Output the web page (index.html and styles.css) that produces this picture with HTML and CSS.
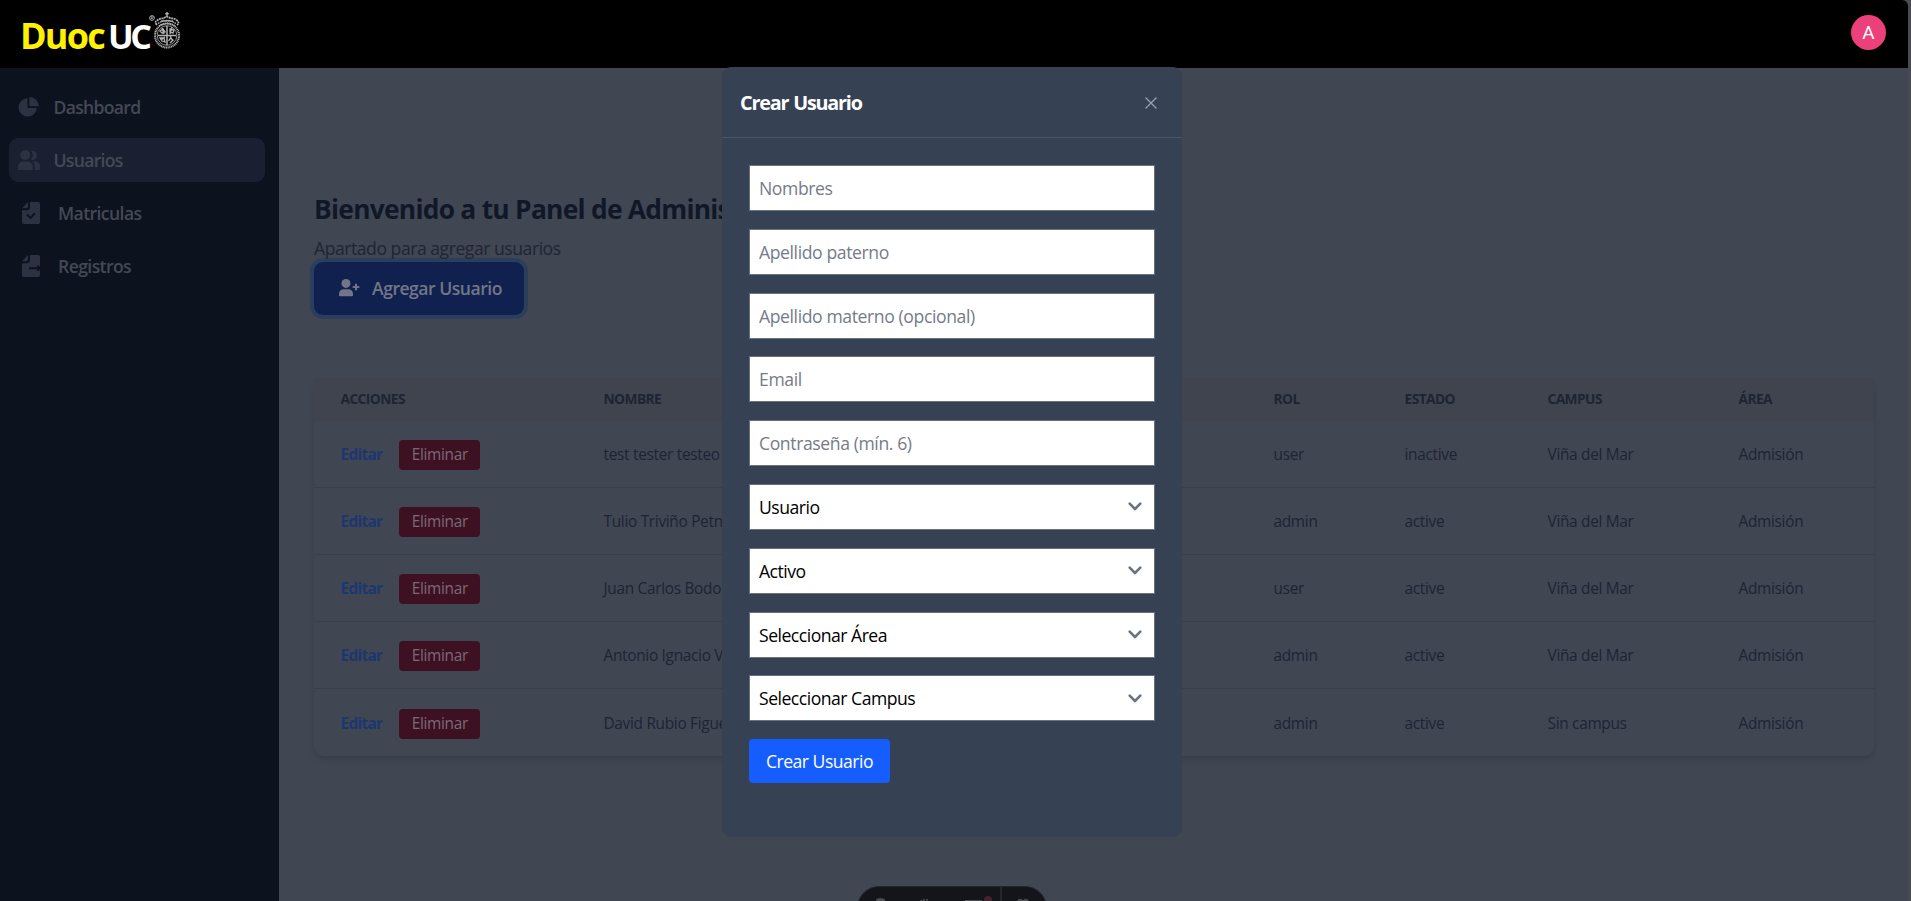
FILE: index.html
```html
<!DOCTYPE html>
<html lang="es">
<head>
<meta charset="utf-8">
<title>Panel de Administración</title>
<link rel="stylesheet" href="styles.css">
</head>
<body>
<div class="page">
  <header class="topbar">
    <div class="logo">
      <span class="logo-duoc">Duoc</span><span class="logo-uc">UC</span>
      <svg class="crest" viewBox="0 0 31 40" width="31" height="40" fill="none" stroke="#b4b4b4">
        <circle cx="3" cy="8" r="2.4" stroke-width=".9"/><path d="M2.2 9.5V6.6h1q.9.1.9.8t-.9.8h-1m1.2 0 .8 1.3" stroke-width=".7"/>
        <path d="M18 2v5M16.3 3.7h3.4" stroke-width="1.4"/>
        <path d="M8 15Q5 12 8 10.5q3-2.5 6.500-2Q18 5 21.500 8.500q4-.5 6.500 2 3 2 0 4.500" stroke-width="1.700" stroke-dasharray="2 .6"/>
        <path d="M9 13.500Q18 7.500 27 13.500M10 16q8-5 16 0M12 11h12" stroke-width="1.400" stroke-dasharray="1.500 .7"/>
        <circle cx="18" cy="25.500" r="12" stroke-width="2.100" stroke-dasharray="1.100 .6"/>
        <circle cx="18" cy="25.500" r="9.800" stroke-width=".8"/>
        <path d="M18 16v19M9 25.500h18" stroke-width="1.500"/>
        <path d="M11 21l3-2 2 3-3 1zM21 19l4 1-1 3-3-1zM11 28l4 0 1 4-3-1zM21 28l3 2-3 3M13 18l2 6M23 17l-2 7M12 30l4-3M24 31l-3-5M19.500 31l2-3" stroke-width="1.300"/>
      </svg>
    </div>
    <div class="avatar">A</div>
  </header>
  <div class="body">
    <nav class="sidebar">
      <a class="item"><svg width="22" height="22" viewBox="0 0 22 22"><path d="M9.500 2.200v9.900h9.400A9.200 9.200 0 1 1 9.500 2.200z"/><path d="M11.300.900v9.400h9.600A9.700 9.700 0 0 0 11.300.900z"/></svg><span>Dashboard</span></a>
      <a class="item active"><svg width="24" height="22" viewBox="0 0 24 22"><circle cx="8.200" cy="6" r="5"/><path d="M1 20v-2.500a5 5 0 0 1 5-5h4.800a5 5 0 0 1 5 5V20a1 1 0 0 1-1 1H2a1 1 0 0 1-1-1zM13.800 10.600a6.300 6.300 0 0 0 .3-8.700 4.600 4.600 0 1 1-.3 8.700zM17.500 21q.5-.5.500-3.200 0-3-2.400-5.200h2.400a5 5 0 0 1 5 5V20a1 1 0 0 1-1 1z"/></svg><span>Usuarios</span></a>
      <a class="item file"><svg width="20" height="24" viewBox="0 0 20 24"><path d="M7 1v4.500a1.800 1.800 0 0 1-1.800 1.800H1z"/><path fill-rule="evenodd" d="M9 1h8.200A1.800 1.800 0 0 1 19 2.800v18.400a1.800 1.800 0 0 1-1.800 1.800H2.800A1.800 1.800 0 0 1 1 21.200V9.200h4.800A3.200 3.200 0 0 0 9 6zM6.800 12.800l-1.400 1.400 4 4 5.300-5.300-1.400-1.400-3.900 3.900z"/></svg><span>Matriculas</span></a>
      <a class="item file"><svg width="20" height="24" viewBox="0 0 20 24"><path d="M7 1v4.500a1.800 1.800 0 0 1-1.800 1.800H1z"/><path d="M9 1h8.200A1.800 1.800 0 0 1 19 2.800V13l-1.900-1.900-1.400 1.400.9.800H8v2h8.600l-.9.800 1.400 1.400 1.900-1.900v5.600a1.800 1.800 0 0 1-1.800 1.800H2.800A1.800 1.800 0 0 1 1 21.200V9.200h4.800A3.200 3.200 0 0 0 9 6z"/></svg><span>Registros</span></a>
    </nav>
    <main class="main">
      <h1>Bienvenido a tu Panel de Administración</h1>
      <p class="lead">Apartado para agregar usuarios</p>
      <button class="add"><svg width="22" height="20" viewBox="0 0 22 20"><circle cx="8" cy="5.400" r="4.500"/><path d="M1 17.300v-1.500a4.600 4.600 0 0 1 4.600-4.600h4.800a4.600 4.600 0 0 1 4.600 4.600v1.500a1 1 0 0 1-1 1H2a1 1 0 0 1-1-1z"/><path d="M18 6.500v5M15.500 9h5" stroke="#717788" stroke-width="2" stroke-linecap="round"/></svg><span>Agregar Usuario</span></button>
      <table class="users">
        <colgroup><col class="c1"><col class="c2"><col class="c3"><col class="c4"><col class="c5"><col></colgroup>
        <thead><tr><th>ACCIONES</th><th>NOMBRE</th><th>ROL</th><th>ESTADO</th><th>CAMPUS</th><th>ÁREA</th></tr></thead>
        <tbody>
          <tr><td><a class="edit">Editar</a><a class="del">Eliminar</a></td><td>test tester testeo</td><td>user</td><td>inactive</td><td>Viña del Mar</td><td>Admisión</td></tr>
          <tr><td><a class="edit">Editar</a><a class="del">Eliminar</a></td><td>Tulio Triviño Petne</td><td>admin</td><td>active</td><td>Viña del Mar</td><td>Admisión</td></tr>
          <tr><td><a class="edit">Editar</a><a class="del">Eliminar</a></td><td>Juan Carlos Bodoque</td><td>user</td><td>active</td><td>Viña del Mar</td><td>Admisión</td></tr>
          <tr><td><a class="edit">Editar</a><a class="del">Eliminar</a></td><td>Antonio Ignacio V</td><td>admin</td><td>active</td><td>Viña del Mar</td><td>Admisión</td></tr>
          <tr><td><a class="edit">Editar</a><a class="del">Eliminar</a></td><td>David Rubio Figueroa</td><td>admin</td><td>active</td><td>Sin campus</td><td>Admisión</td></tr>
        </tbody>
      </table>
    </main>
  </div>
</div>
<div class="devbar">
  <svg width="190" height="15" viewBox="0 0 190 15"><path d="M18 15v-2q1-2 4-2 4 0 5 2v2z" fill="#4b4c50"/><path d="M62 15l2-2M66 14v-2M69 15v-3" stroke="#4b4c50" stroke-width="1.500"/><path d="M107 14h17" stroke="#4b4c50" stroke-width="2"/><circle cx="130" cy="13" r="4" fill="#45222f"/><path d="M143 0v15" stroke="#2b2c31" stroke-width="1.500"/><path d="M159 15q1-4 4-3l2 1 2-1q3-1 4 3z" fill="#4b4c50"/></svg>
</div>
<section class="modal">
  <div class="modal-head"><h2>Crear Usuario</h2><svg width="14" height="14" viewBox="0 0 14 14"><path d="M1.500 1.500l11 11M12.500 1.500l-11 11" stroke="#98a1af" stroke-width="1.300"/></svg></div>
  <form class="form">
    <input placeholder="Nombres">
    <input placeholder="Apellido paterno">
    <input placeholder="Apellido materno (opcional)">
    <input placeholder="Email">
    <input placeholder="Contraseña (mín. 6)">
    <div class="select"><span>Usuario</span><svg width="14" height="9" viewBox="0 0 14 9"><path d="M1.700 1.700L7 7l5.300-5.300"/></svg></div>
    <div class="select"><span>Activo</span><svg width="14" height="9" viewBox="0 0 14 9"><path d="M1.700 1.700L7 7l5.300-5.300"/></svg></div>
    <div class="select"><span>Seleccionar Área</span><svg width="14" height="9" viewBox="0 0 14 9"><path d="M1.700 1.700L7 7l5.300-5.300"/></svg></div>
    <div class="select"><span>Seleccionar Campus</span><svg width="14" height="9" viewBox="0 0 14 9"><path d="M1.700 1.700L7 7l5.300-5.300"/></svg></div>
    <button class="submit" type="button">Crear Usuario</button>
  </form>
</section>
</body>
</html>
```
FILE: styles.css
```css
* { box-sizing: border-box; }
body {
  margin: 0;
  height: 901px;
  overflow: hidden;
  position: relative;
  background: #4a4b50;
  font-family: "Open Sans", "Noto Sans", sans-serif;
  font-size: 17.6px;
  line-height: 26px;
}
.page { width: 1908px; height: 901px; display: flex; flex-direction: column; }
.topbar {
  height: 68px;
  background: #000;
  border-top-right-radius: 6px;
  display: flex;
  align-items: center;
  justify-content: space-between;
  padding: 0 22px 3px 20px;
}
.logo { display: flex; align-items: center; }
.logo-duoc { color: #fff200; font-weight: 700; font-size: 36px; letter-spacing: -1.8px; width: 87px; padding-top: 6px; }
.logo-uc { color: #fff; font-weight: 700; font-size: 34px; letter-spacing: -3.5px; width: 45px; margin-left: 1px; padding-top: 6px; }
.crest { margin: -6px 0 0 -4px; }
.avatar {
  width: 35px;
  height: 35px;
  border-radius: 50%;
  background: #ec407a;
  color: #fff;
  font: 19px/35px Roboto, sans-serif;
  text-align: center;
}
.body { flex: 1; display: flex; min-height: 0; }
.sidebar {
  width: 279px;
  background: #0d121f;
  padding: 17px 14px 0 9px;
  display: flex;
  flex-direction: column;
  gap: 9px;
}
.item {
  height: 44px;
  border-radius: 9px;
  display: flex;
  align-items: center;
  padding-left: 9px;
  color: #444955;
  fill: #2c3241;
  font-weight: 600;
  letter-spacing: -.7px;
}
.item span { margin-left: 13.500px; }
.item svg { width: 22px; flex: none; }
.item.active { background: #1a1f31; padding-left: 8px; }
.item.active svg { width: 24px; }
.item.active span { margin-left: 12.500px; }
.item.file { padding-left: 12px; letter-spacing: -.6px; }
.item.file svg { width: 20px; }
.item.file span { margin-left: 17px; }
.main { flex: 1; background: #414653; padding: 124px 34px 0 35px; }
h1 { margin: 0; font-size: 26.4px; line-height: 35px; font-weight: 700; color: #101828; letter-spacing: -.75px; white-space: nowrap; }
.lead { margin: 8px 0 1px; color: #1e2533; letter-spacing: -.47px; }
.add {
  margin: 0;
  width: 210px;
  height: 53px;
  border: 0;
  border-radius: 9px;
  background: #10204f;
  box-shadow: 0 0 0 4px #2b3f5c;
  color: #717788;
  fill: #717788;
  font: 600 17.6px/26px "Open Sans", sans-serif;
  letter-spacing: -.5px;
  display: flex;
  align-items: center;
  padding: 0 0 1px 24px;
  white-space: nowrap;
}
.add span { margin-left: 12px; }
.users {
  margin-top: 63px;
  width: 1560px;
  table-layout: fixed;
  border-collapse: separate;
  border-spacing: 0;
  border-radius: 9px;
  font-size: 15.4px;
  line-height: 22px;
  color: #1d2433;
  letter-spacing: -.3px;
  background: #414653;
  box-shadow: 0 4px 7px -1px rgba(0, 0, 0, .1), 0 2px 4px -2px rgba(0, 0, 0, .1);
}
.c1 { width: 263px; }
.c2 { width: 670px; }
.c3 { width: 131px; }
.c4 { width: 143px; }
.c5 { width: 191px; }
th { height: 43px; padding: 0 26px 2px 26.500px; text-align: left; font-size: 13.8px; letter-spacing: -.6px; font-weight: 700; background: #40444f; border-radius: inherit; }
td { height: 67px; padding: 2px 26px 0 26.500px; border-bottom: 1px solid #393e4a; white-space: nowrap; }
tr:last-child td { border-bottom: 0; }
.edit { color: #1c376f; font-weight: 700; letter-spacing: -.7px; margin-right: 17px; }
.del { display: inline-block; height: 30px; line-height: 30px; width: 81px; text-align: center; border-radius: 4px; background: #3d1122; color: #7b6a78; }
.devbar {
  position: absolute;
  left: 857px;
  top: 886px;
  width: 190px;
  height: 44px;
  border-radius: 22px;
  background: #14151a;
  border: 1px solid #24262d;
}
.devbar svg { display: block; }
.modal {
  position: absolute;
  left: 722px;
  top: 67px;
  width: 460px;
  height: 770px;
  border-radius: 9px;
  background: #364153;
}
.modal-head {
  height: 71px;
  border-bottom: 1px solid #4a5565;
  display: flex;
  align-items: center;
  justify-content: space-between;
  padding: 2px 24px 0 18px;
}
h2 { margin: 0; font-size: 19.8px; line-height: 28px; font-weight: 700; color: #fff; letter-spacing: -1.2px; word-spacing: 1px; }
.form { padding: 27px; display: flex; flex-direction: column; gap: 17.800px; }
input, .select {
  height: 46px;
  width: 406px;
  border: 1px solid #6a7282;
  border-radius: 0;
  background: #fff;
  padding: 0 9px;
  font: 17.6px/26px "Open Sans", sans-serif;
  letter-spacing: -.4px;
  color: #000;
}
input::placeholder { color: #757b88; opacity: 1; }
.select { display: flex; align-items: center; justify-content: space-between; padding-right: 12px; letter-spacing: -.5px; }
.select svg { fill: none; stroke: #6b7280; stroke-width: 2.600; stroke-linecap: round; stroke-linejoin: round; }
.submit {
  width: 141px;
  height: 44px;
  border: 0;
  border-radius: 4px;
  background: #155dfc;
  color: #fff;
  font: 17.6px/26px "Open Sans", sans-serif;
  letter-spacing: -.5px;
  padding: 0;
}
```
